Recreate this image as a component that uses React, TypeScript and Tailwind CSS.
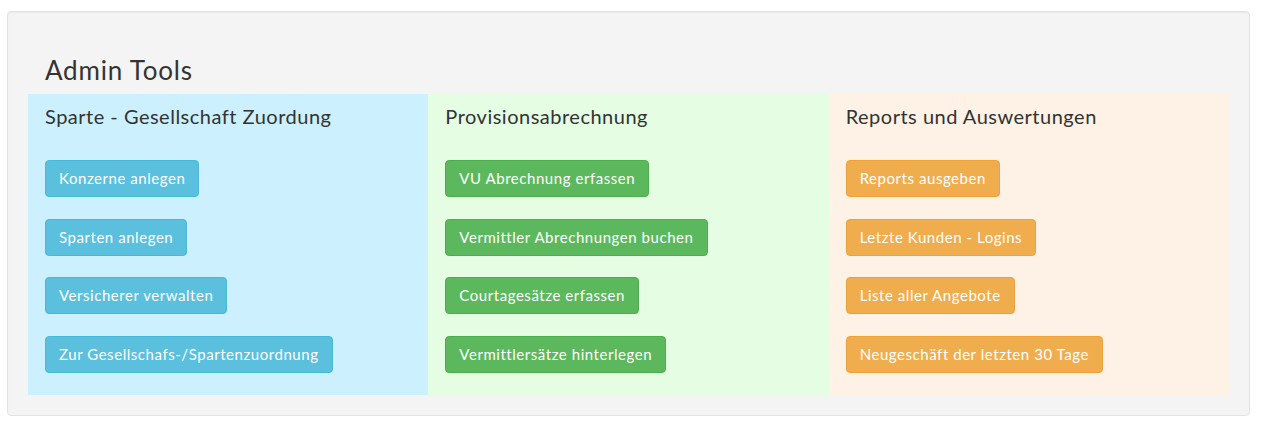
import React from 'react';

type Tone = 'info' | 'success' | 'warning';

interface Section {
  title: string;
  bg: string;
  tone: Tone;
  links: string[];
}

const sections: Section[] = [
  {
    title: 'Sparte - Gesellschaft Zuordung',
    bg: 'bg-[#ccf0fe]',
    tone: 'info',
    links: ['Konzerne anlegen', 'Sparten anlegen', 'Versicherer verwalten', 'Zur Gesellschafs-/Spartenzuordnung'],
  },
  {
    title: 'Provisionsabrechnung',
    bg: 'bg-[#e5fee3]',
    tone: 'success',
    links: ['VU Abrechnung erfassen', 'Vermittler Abrechnungen buchen', 'Courtagesätze erfassen', 'Vermittlersätze hinterlegen'],
  },
  {
    title: 'Reports und Auswertungen',
    bg: 'bg-[#fef2e6]',
    tone: 'warning',
    links: ['Reports ausgeben', 'Letzte Kunden - Logins', 'Liste aller Angebote', 'Neugeschäft der letzten 30 Tage'],
  },
];

const toneClasses: Record<Tone, string> = {
  info: 'bg-[#5bc0de] border-[#46b8da]',
  success: 'bg-[#5cb85c] border-[#4cae4c]',
  warning: 'bg-[#f0ad4e] border-[#eea236]',
};

function ToolButton({ label, tone }: { label: string; tone: Tone }) {
  return (
    <button
      type="button"
      className={`h-[37px] px-[13px] rounded-[4px] border text-[15px] tracking-[0.55px] text-white leading-none ${toneClasses[tone]}`}
    >
      {label}
    </button>
  );
}

export default function App() {
  return (
    <div className="min-h-[422px] bg-white pt-[11px] pl-[7px] pr-[12px] font-['Lato',sans-serif] text-[#333]">
      <div className="rounded-[4px] border border-[#e3e3e3] bg-[#f4f4f4] px-[20px] pb-[20px] shadow-[inset_0_1px_1px_rgba(0,0,0,0.05)]">
        <h3 className="pt-[42px] pb-[8px] pl-[17px] text-[26px] tracking-[0.8px] leading-[32px]">Admin Tools</h3>
        <div className="grid grid-cols-3">
          {sections.map((s) => (
            <div key={s.title} className={`${s.bg} px-[17px] pt-[9px] pb-[22px]`}>
              <h4 className="text-[20px] tracking-[0.5px] leading-[26px] mb-[31px]">{s.title}</h4>
              <div className="flex flex-col items-start gap-[21.7px]">
                {s.links.map((l) => (
                  <ToolButton key={l} label={l} tone={s.tone} />
                ))}
              </div>
            </div>
          ))}
        </div>
      </div>
    </div>
  );
}
